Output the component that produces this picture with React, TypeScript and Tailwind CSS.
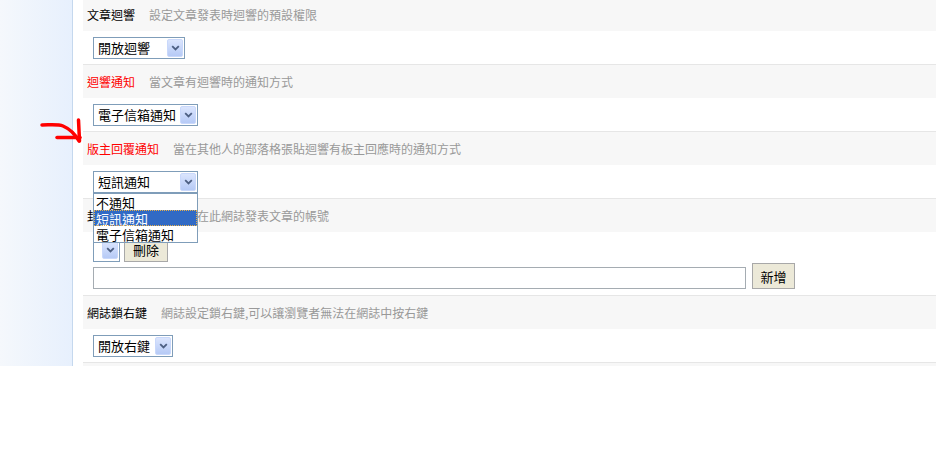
import React from "react";

function Chevron() {
  return (
    <svg width="9" height="6" viewBox="0 0 9 6" className="block">
      <path d="M1.2 1.2 L4.5 4.4 L7.8 1.2" fill="none" stroke="#4d5f82" strokeWidth="1.8" />
    </svg>
  );
}

function ArrowBox() {
  return (
    <div className="ml-auto flex h-[18px] w-[16px] items-center justify-center rounded-[2px] border border-[#c9d8fb] bg-gradient-to-b from-[#dbe5fd] to-[#b6caf6]">
      <Chevron />
    </div>
  );
}

function Sel({ text, className }: { text: string; className: string }) {
  return (
    <div className={"flex h-[22px] items-center border border-[#7f9db9] bg-white pl-[4px] pr-[1px] text-[13px] leading-none text-black " + className}>
      <span>{text}</span>
      <ArrowBox />
    </div>
  );
}

function Head({ label, desc, red }: { label: string; desc: string; red?: boolean }) {
  return (
    <div className="flex h-[34px] items-center border-t border-[#e6e6e6] bg-[#f7f7f7] pl-[4px] text-[12px] leading-none">
      <span className={red ? "text-[#ff0000]" : "text-black"}>{label}</span>
      <span className="ml-[14px] text-[#999999]">{desc}</span>
    </div>
  );
}

function Body({ children }: { children: React.ReactNode }) {
  return <div className="flex h-[33px] items-center bg-white pl-[10px]">{children}</div>;
}

export default function App() {
  return (
    <div className="relative h-[450px] w-[936px] bg-white font-['Noto_Sans_CJK_TC','Noto_Sans_CJK_SC',sans-serif]">
      <div className="flex h-[366px] overflow-hidden">
        <div className="w-[73px] shrink-0 border-r border-[#c5d8ee] bg-gradient-to-r from-[#f5f8fc] to-[#e7f0fd]" />
        <div className="-mt-[3px] ml-[10px] flex-1">
          <Head label="文章迴響" desc="設定文章發表時迴響的預設權限" />
          <Body>
            <Sel text="開放迴響" className="w-[92px]" />
          </Body>
          <Head label="迴響通知" desc="當文章有迴響時的通知方式" red />
          <Body>
            <Sel text="電子信箱通知" className="w-[105px]" />
          </Body>
          <Head label="版主回覆通知" desc="當在其他人的部落格張貼迴響有板主回應時的通知方式" red />
          <Body>
            <Sel text="短訊通知" className="w-[105px]" />
          </Body>
          <Head label="封鎖名單" desc="設定禁止在此網誌發表文章的帳號" />
          <div className="flex h-[63px] flex-col bg-white pl-[10px] pt-[4px]">
            <div className="flex h-[26px] items-end gap-[4px]">
              <div className="flex h-[24px] w-[27px] items-center border border-[#7f9db9] bg-white pr-[1px]">
                <ArrowBox />
              </div>
              <div className="flex h-[26px] w-[44px] items-center justify-center border border-[#a8a8a8] bg-[#ece9d8] text-[13px] leading-none text-black">
                刪除
              </div>
            </div>
            <div className="mt-[1px] flex h-[26px] items-end gap-[6px]">
              <div className="h-[22px] w-[653px] border border-[#a5acb2] bg-white" />
              <div className="flex h-[26px] w-[43px] items-center justify-center border border-[#a8a8a8] bg-[#ece9d8] text-[13px] leading-none text-black">
                新增
              </div>
            </div>
          </div>
          <Head label="網誌鎖右鍵" desc="網誌設定鎖右鍵,可以讓瀏覽者無法在網誌中按右鍵" />
          <Body>
            <Sel text="開放右鍵" className="w-[80px]" />
          </Body>
          <Head label="" desc="" />
        </div>
      </div>

      {/* open dropdown list */}
      <div className="absolute left-[93px] top-[193px] w-[105px] border border-[#7f9db9] bg-white text-[13px] leading-none text-black">
        <div className="flex h-[16px] items-center pl-[2px]">不通知</div>
        <div className="flex h-[16px] items-center bg-[#316ac5] pl-[2px] text-white outline-1 outline-dotted outline-offset-[-1px] outline-[#e8b04a]">短訊通知</div>
        <div className="flex h-[16px] items-center pl-[2px]">電子信箱通知</div>
      </div>

      {/* hand-drawn red arrow annotation */}
      <svg className="absolute left-0 top-0" width="100" height="160" viewBox="0 0 100 160">
        <path d="M42 125 C50 125 58 124 63 126 C70 129 75 134 79 141" fill="none" stroke="#ff0000" strokeWidth="3.5" strokeLinecap="round" />
        <path d="M78.5 120 L79.5 141" fill="none" stroke="#ff0000" strokeWidth="3.5" strokeLinecap="round" />
        <path d="M57 137.5 L80 137.5" fill="none" stroke="#ff0000" strokeWidth="3.5" strokeLinecap="round" />
      </svg>
    </div>
  );
}
